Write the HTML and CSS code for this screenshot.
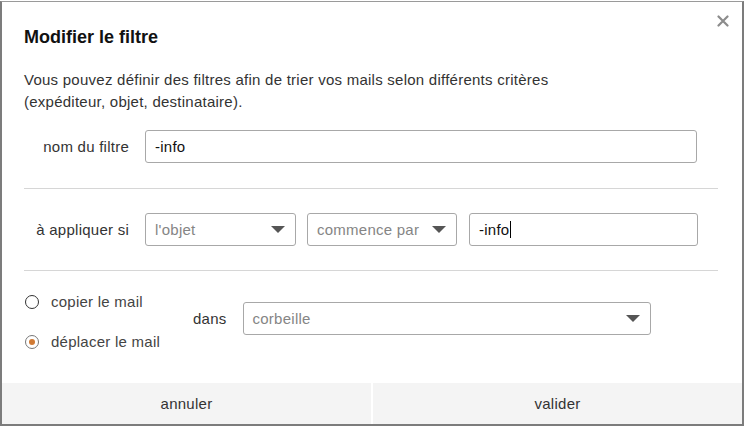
FILE: index.html
```html
<!DOCTYPE html>
<html lang="fr">
<head>
<meta charset="utf-8">
<title>Modifier le filtre</title>
<link rel="stylesheet" href="styles.css">
</head>
<body>
<div class="dialog">
  <button class="close" aria-label="Fermer">
    <svg width="12" height="12" viewBox="0 0 12 12"><path d="M1.5 1.5 L10.5 10.5 M10.5 1.5 L1.5 10.5" stroke="#8c8c8c" stroke-width="2.2" stroke-linecap="round"/></svg>
  </button>
  <div class="content">
    <h1 class="title">Modifier le filtre</h1>
    <p class="desc">Vous pouvez définir des filtres afin de trier vos mails selon différents critères<br>(expéditeur, objet, destinataire).</p>
    <div class="row row-name">
      <label class="label">nom du filtre</label>
      <div class="field field-name">-info</div>
    </div>
    <div class="sep sep-first"></div>
    <div class="row row-cond">
      <label class="label">à appliquer si</label>
      <div class="select select-subject"><span>l'objet</span><span class="arrow"></span></div>
      <div class="select select-op"><span>commence par</span><span class="arrow"></span></div>
      <div class="field field-value">-info<span class="caret"></span></div>
    </div>
    <div class="sep sep-second"></div>
    <div class="row row-action">
      <div class="radios">
        <div class="radio"><span class="dot"></span>copier le mail</div>
        <div class="radio checked"><span class="dot"></span>déplacer le mail</div>
      </div>
      <div class="dest">
        <span class="dans">dans</span>
        <div class="select select-folder"><span>corbeille</span><span class="arrow"></span></div>
      </div>
    </div>
  </div>
  <div class="footer">
    <button class="btn">annuler</button>
    <button class="btn">valider</button>
  </div>
</div>
</body>
</html>
```

FILE: styles.css
```css
html, body {
  margin: 0;
  background: #fff;
}
body {
  padding-top: 1px;
  font-family: "Liberation Sans", Arial, sans-serif;
  color: #333;
  letter-spacing: 0.25px;
}
.dialog {
  box-sizing: border-box;
  width: 744px;
  height: 425px;
  border: 2px solid #7c7c7c;
  border-top: 1px solid #9a9a9a;
  position: relative;
  display: flex;
  flex-direction: column;
  background: #fff;
}
.close {
  position: absolute;
  top: 13px;
  right: 13px;
  width: 12px;
  height: 12px;
  padding: 0;
  border: 0;
  background: none;
  display: flex;
}
.content {
  padding: 24px 24px 0 22px;
}
.title {
  margin: 0;
  font-size: 18px;
  line-height: 22px;
  font-weight: bold;
  color: #111;
  letter-spacing: 0;
}
.desc {
  margin: 21px 0 0;
  font-size: 15px;
  line-height: 22px;
  color: #333;
}
.row {
  display: flex;
  align-items: center;
}
.row-name {
  margin-top: 17px;
}
.label {
  width: 105px;
  margin-right: 16px;
  text-align: right;
  font-size: 15px;
  color: #333;
}
.field,
.select {
  box-sizing: border-box;
  height: 33px;
  border: 1px solid #a8a8a8;
  border-radius: 3px;
  font-size: 15px;
  display: flex;
  align-items: center;
  background: #fff;
}
.field {
  padding: 0 9px;
  color: #111;
}
.select {
  padding: 0 10px 0 9px;
  color: #858585;
  justify-content: space-between;
}
.field-name {
  width: 552px;
}
.select-subject {
  width: 151px;
}
.select-op {
  width: 150px;
  margin-left: 11px;
}
.field-value {
  width: 229px;
  margin-left: 12px;
}
.caret {
  display: inline-block;
  width: 1px;
  height: 17px;
  background: #000;
  margin-left: 1px;
}
.arrow {
  width: 0;
  height: 0;
  border-left: 7px solid transparent;
  border-right: 7px solid transparent;
  border-top: 7px solid #555;
}
.sep {
  height: 1px;
  background: #d6d6d6;
}
.sep-first {
  margin: 25px 0 24px;
}
.sep-second {
  margin: 24px 0 0;
}
.row-action {
  margin-top: 20px;
  align-items: flex-start;
}
.radios {
  width: 169px;
  display: flex;
  flex-direction: column;
  gap: 18px;
}
.radio {
  display: flex;
  align-items: center;
  font-size: 15px;
  line-height: 22px;
  color: #444;
}
.dot {
  box-sizing: border-box;
  width: 14px;
  height: 14px;
  margin: 0 12px 0 1px;
  border: 1.5px solid #333;
  border-radius: 50%;
  background: #fff;
  display: flex;
  align-items: center;
  justify-content: center;
}
.radio.checked .dot {
  border-color: #777;
}
.radio.checked .dot::after {
  content: "";
  width: 6px;
  height: 6px;
  border-radius: 50%;
  background: #d07a34;
}
.dest {
  margin-top: 11px;
  display: flex;
  align-items: center;
}
.dans {
  font-size: 15px;
  color: #333;
  margin-right: 16px;
}
.select-folder {
  width: 408px;
}
.footer {
  margin-top: auto;
  height: 41px;
  display: flex;
  gap: 2px;
  background: #fff;
}
.btn {
  flex: 1;
  border: 0;
  margin: 0;
  padding: 0;
  background: #f4f4f4;
  font-family: "Liberation Sans", Arial, sans-serif;
  font-size: 15px;
  letter-spacing: 0.25px;
  color: #333;
}
```
